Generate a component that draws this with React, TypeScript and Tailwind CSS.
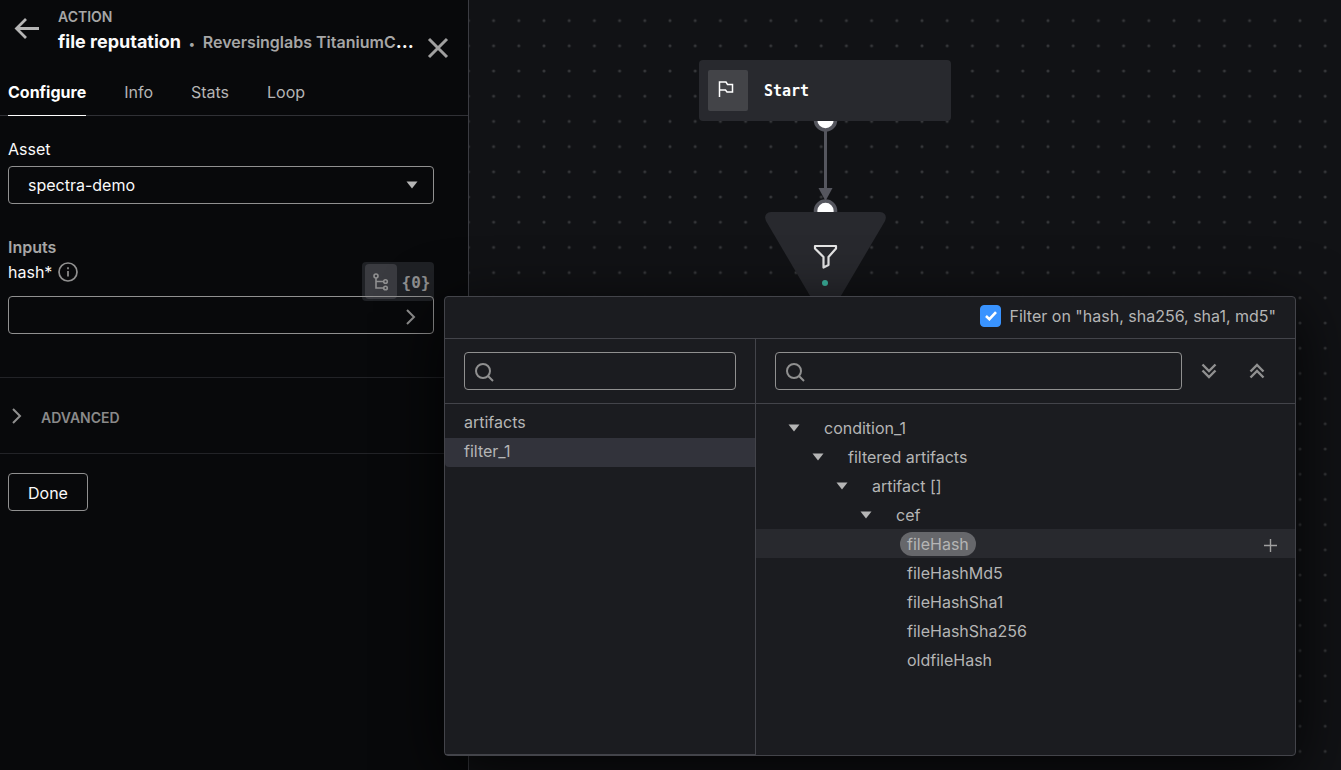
import { ReactNode, useState } from 'react';
import clsx from 'clsx';

interface TreeItem {
  label: string;
  indent: string;
  branch?: boolean;
}

const TABS = ['Configure', 'Info', 'Stats', 'Loop'];

const SOURCES = ['artifacts', 'filter_1'];

const TREE: TreeItem[] = [
  { label: 'condition_1', indent: 'pl-8', branch: true },
  { label: 'filtered artifacts', indent: 'pl-14', branch: true },
  { label: 'artifact []', indent: 'pl-20', branch: true },
  { label: 'cef', indent: 'pl-[104px]', branch: true },
  { label: 'fileHash', indent: 'pl-36' },
  { label: 'fileHashMd5', indent: 'pl-36' },
  { label: 'fileHashSha1', indent: 'pl-36' },
  { label: 'fileHashSha256', indent: 'pl-36' },
  { label: 'oldfileHash', indent: 'pl-36' },
];

function Caret() {
  return (
    <svg className="w-3 h-2 shrink-0" viewBox="0 0 12 8" fill="#b5b5b5">
      <path d="M0.5 0.5h11L6 7.5z" />
    </svg>
  );
}

function ChevronRight() {
  return (
    <svg className="w-3 h-4" viewBox="0 0 12 16" fill="none" stroke="#909090" strokeWidth={2}>
      <path d="M2 1l7 7-7 7" />
    </svg>
  );
}

function SearchBox({ label }: { label: string }) {
  return (
    <label className="flex flex-1 min-w-0 h-[38px] items-center rounded border border-[#909090] px-[10px]">
      <svg className="w-[19px] h-[19px] shrink-0 mt-[2px]" viewBox="0 0 19 19" fill="none" stroke="#909090" strokeWidth={2}>
        <circle cx="8" cy="8" r="7" />
        <path d="M13 13l5 5" />
      </svg>
      <input type="text" aria-label={label} className="flex-1 min-w-0 bg-transparent pl-3 outline-none" />
    </label>
  );
}

function IconButton({ label, children }: { label: string; children: ReactNode }) {
  return (
    <button type="button" aria-label={label} className="flex w-12 h-[38px] items-center justify-center">
      {children}
    </button>
  );
}

function DataPicker() {
  const [source, setSource] = useState('filter_1');
  const [selected, setSelected] = useState('fileHash');

  return (
    <div className="absolute left-full -top-px z-20 ml-[11px] flex h-[460px] w-[852px] flex-col rounded border border-[#43444a] bg-[#1b1c20] text-[#b5b5b5] shadow-[0_16px_64px_rgba(0,0,0,0.85)]">
      <div className="flex h-[42px] shrink-0 items-center justify-end border-b border-[#43444a] pr-[19px] pb-[3px]">
        <label className="flex items-center gap-2">
          <span className="relative flex">
            <input
              type="checkbox"
              defaultChecked
              className="peer w-[21px] h-[22px] appearance-none rounded border border-[#909090] checked:border-[#3993ff] checked:bg-[#3993ff]"
            />
            <svg
              className="pointer-events-none absolute inset-0 m-auto hidden w-3 h-[10px] peer-checked:block"
              viewBox="0 0 12 10"
              fill="none"
              stroke="white"
              strokeWidth={2.6}
            >
              <path d="M1 5l3.4 3.2L11 1.2" />
            </svg>
          </span>
          Filter on "hash, sha256, sha1, md5"
        </label>
      </div>

      <div className="flex min-h-0 flex-1">
        <div className="flex w-[311px] shrink-0 flex-col border-r border-b border-[#43444a]">
          <div className="flex h-[65px] shrink-0 items-center border-b border-[#43444a] px-[19px]">
            <SearchBox label="Search sources" />
          </div>
          <ul className="pt-[5px]">
            {SOURCES.map((s) => (
              <li key={s}>
                <button
                  type="button"
                  onClick={() => setSource(s)}
                  className={clsx(
                    'block w-full h-[29px] rounded-bl px-[19px] pb-[3px] text-left',
                    s === source && 'bg-[#32333b]'
                  )}
                >
                  {s}
                </button>
              </li>
            ))}
          </ul>
        </div>

        <div className="flex min-w-0 flex-1 flex-col">
          <div className="flex h-[65px] shrink-0 items-center border-b border-[#43444a] pl-[19px] pr-[14px]">
            <SearchBox label="Search fields" />
            <div className="flex pl-[3px]">
              <IconButton label="Expand all">
                <svg className="w-4 h-4" viewBox="0 0 16 16" fill="none" stroke="#909090" strokeWidth={2.4}>
                  <path d="M1.500 1.500L8 8l6.500-6.500M1.500 7.500L8 14l6.500-6.500" />
                </svg>
              </IconButton>
              <IconButton label="Collapse all">
                <svg className="w-4 h-4" viewBox="0 0 16 16" fill="none" stroke="#909090" strokeWidth={2.4}>
                  <path d="M1.500 8.500L8 2l6.500 6.500M1.500 14.500L8 8l6.500 6.500" />
                </svg>
              </IconButton>
            </div>
          </div>
          <ul className="pt-[9px]">
            {TREE.map((item) => {
              const active = item.label === selected;
              return (
                <li key={item.label} className={clsx('flex h-[29px] items-center pr-[18px]', item.indent, active && 'bg-[#28292e]')}>
                  {item.branch ? (
                    <button type="button" className="flex items-center gap-6">
                      <Caret />
                      {item.label}
                    </button>
                  ) : (
                    <button
                      type="button"
                      onClick={() => setSelected(item.label)}
                      className={clsx('h-6 rounded-full px-[7px]', active && 'bg-[#66676b]')}
                    >
                      {item.label}
                    </button>
                  )}
                  {active && (
                    <button type="button" aria-label="Add field" className="ml-auto mt-1">
                      <svg className="w-[13px] h-[13px]" viewBox="0 0 13 13" stroke="#a0a0a0" strokeWidth={1.400}>
                        <path d="M6.500 0v13M0 6.500h13" />
                      </svg>
                    </button>
                  )}
                </li>
              );
            })}
          </ul>
        </div>
      </div>
    </div>
  );
}

function HashField() {
  return (
    <div>
      <div className="flex h-[38px] items-start justify-between">
        <div className="flex items-center gap-[6px]">
          <label htmlFor="hash" className="leading-5 text-[#fafafa]">
            hash*
          </label>
          <svg className="w-5 h-5" viewBox="0 0 20 20" fill="none" stroke="#909090" strokeWidth={1.700}>
            <circle cx="10" cy="10" r="9" />
            <path d="M10 9v5.500M10 5.200v2" />
          </svg>
        </div>
        <div className="flex h-[39px] w-[72px] rounded bg-[#1f2125] p-[2px]">
          <button type="button" aria-label="Pick from data" className="ml-px flex w-8 items-center justify-center rounded bg-[#3a3b40] pt-px">
            <svg className="w-4 h-[18px]" viewBox="0 0 16 18" fill="none" stroke="#909090" strokeWidth={1.600}>
              <circle cx="3" cy="3" r="2" />
              <circle cx="12.500" cy="8.500" r="1.800" />
              <circle cx="12.500" cy="15" r="1.800" />
              <path d="M3 5v10h7.700M3 8.500h7.700" />
            </svg>
          </button>
          <button type="button" className="flex-1 pl-[3px] pt-[3px] font-['DejaVu_Sans_Mono',monospace] font-bold text-[#909090]">
            {'{0}'}
          </button>
        </div>
      </div>
      <div className="relative -mt-1 flex h-[38px] items-center rounded border border-[#909090] pr-4">
        <input id="hash" type="text" className="flex-1 min-w-0 h-full bg-transparent pl-[19px] outline-none" />
        <button type="button" aria-label="Open data picker" className="mt-1">
          <ChevronRight />
        </button>
        <DataPicker />
      </div>
    </div>
  );
}

function ActionPanel() {
  return (
    <aside className="relative z-10 w-[469px] shrink-0 border-r border-[#3b3c42] bg-[#08090b]">
      <header className="flex h-[69px] pt-2 pl-[14px] pr-[19px]">
        <button type="button" aria-label="Back" className="mt-2 h-6">
          <svg className="w-[26px] h-6" viewBox="0 0 26 24" fill="none" stroke="#b5b5b5" strokeWidth={2.800}>
            <path d="M25 12.500H3M12 3l-9.500 9.500L12 22" />
          </svg>
        </button>
        <div className="ml-[18px] min-w-0 flex-1">
          <p className="text-sm leading-[18px] font-semibold text-[#a6a6a6]">ACTION</p>
          <h1 className="text-lg leading-8 font-bold whitespace-nowrap text-[#fafafa]">
            file reputation
            <span className="px-2 text-xs text-[#a6a6a6]">•</span>
            <span className="text-base font-semibold text-[#a6a6a6]">Reversinglabs TitaniumC</span>...
          </h1>
        </div>
        <button type="button" aria-label="Close" className="ml-2 mt-7 h-6">
          <svg className="w-[22px] h-[22px]" viewBox="0 0 22 22" stroke="#a0a0a0" strokeWidth={3}>
            <path d="M2 2l18 18M20 2L2 20" />
          </svg>
        </button>
      </header>

      <nav className="flex h-[47px] gap-[38px] border-b border-[#303136] px-2">
        {TABS.map((tab, i) => (
          <a
            key={tab}
            href="#"
            className={clsx(
              'h-[47px] leading-[46px]',
              i === 0 ? 'border-b border-white font-bold text-white' : 'text-[#b5b5b5]'
            )}
          >
            {tab}
          </a>
        ))}
      </nav>

      <div className="pt-[23px] pl-2 pr-[34px]">
        <label htmlFor="asset" className="block leading-5 text-[#fafafa]">
          Asset
        </label>
        <div className="relative mt-[7px]">
          <select
            id="asset"
            className="h-[38px] w-full appearance-none rounded border border-[#909090] bg-transparent px-[19px] text-[#fafafa]"
          >
            <option>spectra-demo</option>
          </select>
          <span className="pointer-events-none absolute right-4 top-[15px]">
            <Caret />
          </span>
        </div>

        <h2 className="mt-[33px] mb-[5px] leading-5 font-semibold text-[#a6a6a6]">Inputs</h2>
        <HashField />
      </div>

      <button
        type="button"
        className="mt-[43px] flex h-[77px] w-full items-center gap-[18px] border-y border-[#222327] pl-[11px] text-sm font-semibold text-[#8a8a8a]"
      >
        <ChevronRight />
        <span className="pt-1">ADVANCED</span>
      </button>

      <button type="button" className="mt-[19px] ml-2 h-[38px] rounded border border-[#909090] px-[19px] pt-px text-[#fafafa]">
        Done
      </button>
    </aside>
  );
}

function FlowCanvas() {
  return (
    <main className="relative min-w-0 flex-1 overflow-hidden bg-[#111215]">
      <svg className="absolute inset-0 h-full w-full">
        <defs>
          <pattern id="dots" x="12" y="8" width="25.2" height="25.2" patternUnits="userSpaceOnUse">
            <circle cx="12.600" cy="12.600" r="1.500" fill="#36373a" />
          </pattern>
        </defs>
        <rect width="100%" height="100%" fill="url(#dots)" />
        {/* connector from the start node to the filter */}
        <g>
          <path d="M356.500 121v70" stroke="#55565e" strokeWidth={3} />
          <path d="M349.500 188h14l-7 13z" fill="#55565e" />
          <circle cx="356.500" cy="120" r="10" fill="white" stroke="#55565e" strokeWidth={3.600} />
          <circle cx="356.500" cy="211" r="10" fill="white" stroke="#55565e" strokeWidth={3.600} />
        </g>
        {/* filter node */}
        <path d="M302 212h109q8 1 5 9L366 306q-9 12-19 0L297 221q-3-8 5-9z" fill="#28292e" />
        <path
          d="M346 246h21v2.500l-7.500 8.500v8l-5 2.500V257l-8.500-8.500z"
          fill="none"
          stroke="#e6e6e6"
          strokeWidth={2.200}
          strokeLinejoin="round"
        />
        <circle cx="356" cy="283" r="3" fill="#3cb5a0" />
      </svg>

      <div className="absolute left-[230px] top-[60px] flex h-[61px] w-[252px] items-center gap-4 rounded bg-[#28292e] pl-[9px]">
        <span className="flex h-[41px] w-10 items-center justify-center rounded-xs bg-[#434448]">
          <svg className="w-4 h-4 mr-1 mb-1" viewBox="0 0 16 16" fill="none" stroke="white" strokeWidth={1.500}>
            <path d="M1.500 16V1h6.500l1.500 2.500h5v7.500H9L7.500 9h-6" />
          </svg>
        </span>
        <span className="pt-[2px] font-['DejaVu_Sans_Mono',monospace] text-[15px] font-bold text-white">Start</span>
      </div>
    </main>
  );
}

export default function App() {
  return (
    <div className="flex min-h-screen overflow-hidden bg-[#111215] font-['Inter','Liberation_Sans',sans-serif] text-base">
      <ActionPanel />
      <FlowCanvas />
    </div>
  );
}
